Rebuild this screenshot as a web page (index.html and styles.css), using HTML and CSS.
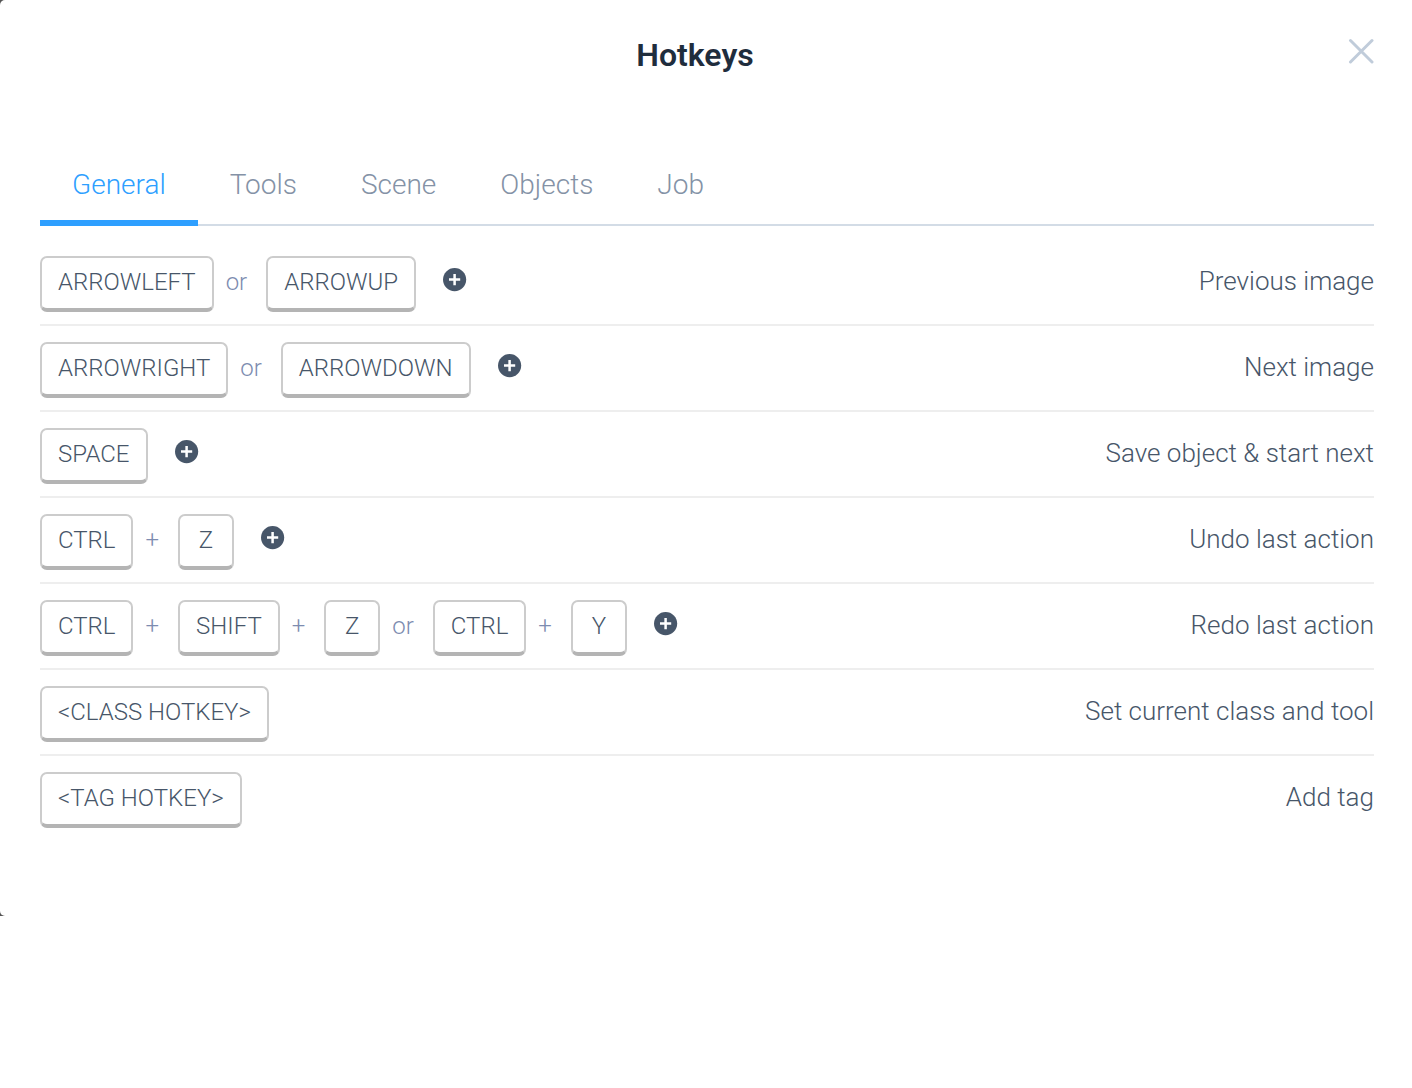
FILE: index.html
```html
<!DOCTYPE html>
<html lang="en">
<head>
<meta charset="utf-8">
<title>Hotkeys</title>
<link rel="stylesheet" href="styles.css">
</head>
<body>
<div class="backdrop">
<main class="modal" role="dialog" aria-labelledby="title">
  <header class="header">
    <h1 class="title" id="title">Hotkeys</h1>
    <button class="close" type="button" aria-label="Close"><svg width="26" height="26" viewBox="0 0 26 26"><path d="M2.500 2.500 24 24M24 2.500 2.500 24"/></svg></button>
  </header>
  <nav class="tabs">
    <button class="tab active" type="button">General</button>
    <button class="tab" type="button">Tools</button>
    <button class="tab" type="button">Scene</button>
    <button class="tab" type="button">Objects</button>
    <button class="tab" type="button">Job</button>
  </nav>
  <svg class="defs" width="0" height="0"><symbol id="plus" viewBox="0 0 24 24"><circle cx="11.600" cy="11.600" r="11.600"/><path d="M11.600 6V17.200M6 11.600H17.200"/></symbol></svg>
  <ul class="list">
    <li class="row"><div class="keys"><kbd>ARROWLEFT</kbd><span class="sep">or</span><kbd>ARROWUP</kbd><button class="add" type="button" aria-label="Add hotkey"><svg width="24" height="24"><use href="#plus"/></svg></button></div><span class="desc">Previous image</span></li>
    <li class="row"><div class="keys"><kbd>ARROWRIGHT</kbd><span class="sep">or</span><kbd>ARROWDOWN</kbd><button class="add" type="button" aria-label="Add hotkey"><svg width="24" height="24"><use href="#plus"/></svg></button></div><span class="desc">Next image</span></li>
    <li class="row"><div class="keys"><kbd>SPACE</kbd><button class="add" type="button" aria-label="Add hotkey"><svg width="24" height="24"><use href="#plus"/></svg></button></div><span class="desc">Save object &amp; start next</span></li>
    <li class="row"><div class="keys"><kbd>CTRL</kbd><span class="sep">+</span><kbd>Z</kbd><button class="add" type="button" aria-label="Add hotkey"><svg width="24" height="24"><use href="#plus"/></svg></button></div><span class="desc">Undo last action</span></li>
    <li class="row"><div class="keys"><kbd>CTRL</kbd><span class="sep">+</span><kbd>SHIFT</kbd><span class="sep">+</span><kbd>Z</kbd><span class="sep">or</span><kbd>CTRL</kbd><span class="sep">+</span><kbd>Y</kbd><button class="add" type="button" aria-label="Add hotkey"><svg width="24" height="24"><use href="#plus"/></svg></button></div><span class="desc">Redo last action</span></li>
    <li class="row"><div class="keys"><kbd>&lt;CLASS HOTKEY&gt;</kbd></div><span class="desc">Set current class and tool</span></li>
    <li class="row"><div class="keys"><kbd>&lt;TAG HOTKEY&gt;</kbd></div><span class="desc">Add tag</span></li>
  </ul>
</main>
</div>
</body>
</html>
```
FILE: styles.css
```css
* { box-sizing: border-box; }
body { margin: 0; background: #fff; font-family: Roboto, sans-serif; font-weight: 300; color: #475669; }
button { border: 0; padding: 0; background: none; font: inherit; color: inherit; cursor: pointer; }
svg { display: block; }
.backdrop { background: linear-gradient(90deg, #555 50%, #fff 50%); }
.modal { padding: 38px 38px 74px 40px; background: #fff; border-radius: 5px; }
.header { display: flex; align-items: flex-start; height: 106px; }
.title { flex: 1; margin: 0; padding-left: 2px; font-size: 32px; line-height: 34px; font-weight: 600; text-align: center; color: #1f2d3d; }
.close svg { fill: none; stroke: #c0ccda; stroke-width: 3; stroke-linecap: round; }
.tabs { display: flex; height: 82px; border-bottom: 2px solid #d3dce6; }
.tab { height: 82px; padding: 4px 32px 0; font-size: 28px; border-bottom: 6px solid transparent; color: #8492a6; }
.tab.active { border-color: #2e9fff; color: #2e9fff; }
.defs { position: absolute; }
.list { margin: 14px 0 0; padding: 0; list-style: none; }
.row { display: flex; justify-content: space-between; height: 86px; padding-top: 16px; border-bottom: 2px solid #eee; }
.row:last-child { border-bottom: 0; }
.keys { display: flex; }
kbd { min-width: 56px; height: 56px; padding: 0 16px; border: 2px solid #ccc; border-bottom: 4px solid #b4b4b4; border-radius: 7px; font: inherit; font-size: 24px; line-height: 48px; text-align: center; }
.sep { padding: 0 19px 0 12px; font-size: 24px; line-height: 52px; color: #7d8cb0; }
.add { align-self: flex-start; margin: 12px 0 0 27px; }
#plus { fill: #475669; }
#plus path { stroke: #fff; stroke-width: 2.5; }
.desc { font-size: 26px; line-height: 50px; }
```
